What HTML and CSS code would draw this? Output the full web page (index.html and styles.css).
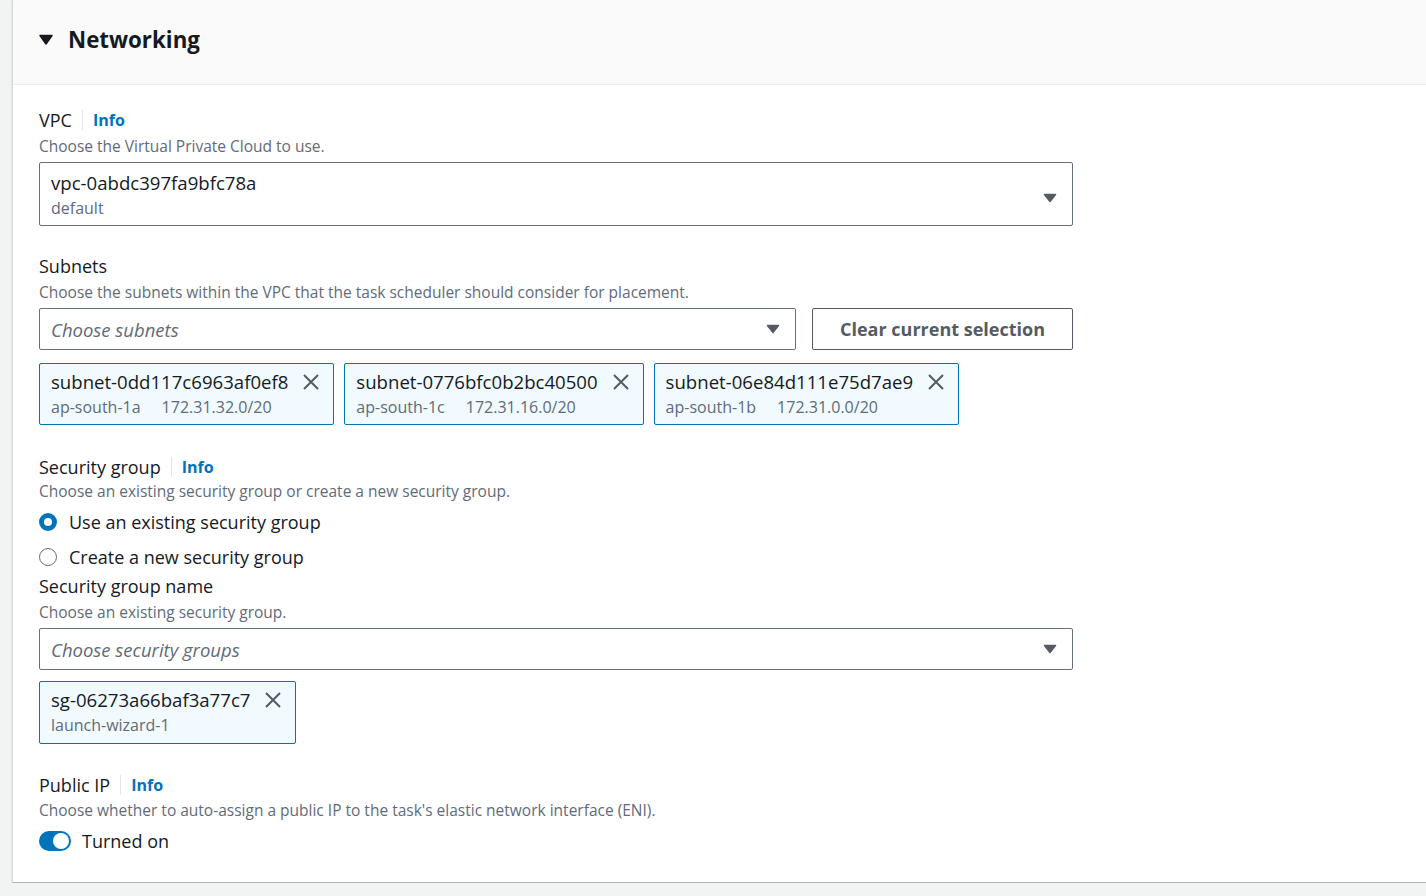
FILE: index.html
```html
<!DOCTYPE html>
<html lang="en">
<head>
  <meta charset="UTF-8">
  <title>Networking</title>
  <link rel="stylesheet" href="styles.css">
</head>
<body>
  <div class="panel">
    <div class="panel-header">
      <svg class="caret-down" width="14" height="11" viewBox="0 0 14 11"><path d="M1 1.5h12L7 10z" fill="#16191f" stroke="#16191f" stroke-width="1.5" stroke-linejoin="round"/></svg>
      <h2>Networking</h2>
    </div>

    <div class="panel-body">
      <div class="field field-vpc">
        <div class="label-row"><span class="label">VPC</span><span class="divider"></span><a class="info">Info</a></div>
        <div class="desc">Choose the Virtual Private Cloud to use.</div>
        <div class="select select-tall">
          <div class="select-text">
            <div class="value">vpc-0abdc397fa9bfc78a</div>
            <div class="subvalue">default</div>
          </div>
          <svg class="arrow" width="14" height="10" viewBox="0 0 14 10"><path d="M1.5 1.5h11L7 8.5z" fill="#545b64" stroke="#545b64" stroke-width="1.5" stroke-linejoin="round"/></svg>
        </div>
      </div>

      <div class="field field-subnets">
        <div class="label-row"><span class="label">Subnets</span></div>
        <div class="desc">Choose the subnets within the VPC that the task scheduler should consider for placement.</div>
        <div class="select-row">
          <div class="select select-narrow">
            <span class="placeholder">Choose subnets</span>
            <svg class="arrow" width="14" height="10" viewBox="0 0 14 10"><path d="M1.5 1.5h11L7 8.5z" fill="#545b64" stroke="#545b64" stroke-width="1.5" stroke-linejoin="round"/></svg>
          </div>
          <button class="btn">Clear current selection</button>
        </div>
        <div class="tokens tokens-subnets">
          <div class="token">
            <div class="token-text">
              <div class="value">subnet-0dd117c6963af0ef8</div>
              <div class="tags"><span>ap-south-1a</span><span>172.31.32.0/20</span></div>
            </div>
            <svg class="close" width="18" height="18" viewBox="0 0 18 18"><path d="M2 2l14 14M16 2L2 16" stroke="#545b64" stroke-width="2"/></svg>
          </div>
          <div class="token">
            <div class="token-text">
              <div class="value">subnet-0776bfc0b2bc40500</div>
              <div class="tags"><span>ap-south-1c</span><span>172.31.16.0/20</span></div>
            </div>
            <svg class="close" width="18" height="18" viewBox="0 0 18 18"><path d="M2 2l14 14M16 2L2 16" stroke="#545b64" stroke-width="2"/></svg>
          </div>
          <div class="token">
            <div class="token-text">
              <div class="value">subnet-06e84d111e75d7ae9</div>
              <div class="tags"><span>ap-south-1b</span><span>172.31.0.0/20</span></div>
            </div>
            <svg class="close" width="18" height="18" viewBox="0 0 18 18"><path d="M2 2l14 14M16 2L2 16" stroke="#545b64" stroke-width="2"/></svg>
          </div>
        </div>
      </div>

      <div class="field field-sg">
        <div class="label-row"><span class="label">Security group</span><span class="divider"></span><a class="info">Info</a></div>
        <div class="desc">Choose an existing security group or create a new security group.</div>
        <div class="radios">
          <label class="radio"><span class="dot checked"></span>Use an existing security group</label>
          <label class="radio"><span class="dot"></span>Create a new security group</label>
        </div>
      </div>

      <div class="field field-sgname">
        <div class="label-row"><span class="label">Security group name</span></div>
        <div class="desc">Choose an existing security group.</div>
        <div class="select">
          <span class="placeholder">Choose security groups</span>
          <svg class="arrow" width="14" height="10" viewBox="0 0 14 10"><path d="M1.5 1.5h11L7 8.5z" fill="#545b64" stroke="#545b64" stroke-width="1.5" stroke-linejoin="round"/></svg>
        </div>
        <div class="tokens tokens-sg">
          <div class="token">
            <div class="token-text">
              <div class="value">sg-06273a66baf3a77c7</div>
              <div class="tags"><span>launch-wizard-1</span></div>
            </div>
            <svg class="close" width="18" height="18" viewBox="0 0 18 18"><path d="M2 2l14 14M16 2L2 16" stroke="#545b64" stroke-width="2"/></svg>
          </div>
        </div>
      </div>

      <div class="field field-ip">
        <div class="label-row"><span class="label">Public IP</span><span class="divider"></span><a class="info">Info</a></div>
        <div class="desc">Choose whether to auto-assign a public IP to the task's elastic network interface (ENI).</div>
        <div class="toggle-row">
          <span class="toggle"><span class="knob"></span></span>
          <span>Turned on</span>
        </div>
      </div>
    </div>
  </div>
</body>
</html>
```

FILE: styles.css
```css
body {
  margin: 0;
  background: #f2f3f3;
  font-family: "Open Sans", "Noto Sans", Arial, sans-serif;
  color: #16191f;
  font-size: 18px;
}
.panel {
  margin-left: 12px;
  height: 882px;
  background: #ffffff;
  border-left: 1px solid #d5dbdb;
  border-bottom: 1px solid #aab7b8;
  box-shadow: 0 1px 2px rgba(0,0,0,0.15);
}
.panel-header {
  height: 85px;
  box-sizing: border-box;
  background: #fafafa;
  border-bottom: 1px solid #eaeded;
  display: flex;
  align-items: center;
  padding-left: 26px;
  padding-bottom: 6px;
}
.caret-down {
  margin-right: 15px;
}
.panel-header h2 {
  margin: 0;
  font-size: 22.3px;
  font-weight: 700;
}
.panel-body {
  padding: 24px 0 0 26px;
  width: 1034px;
}
.field-subnets { margin-top: 29px; }
.field-sg { margin-top: 31px; }
.field-sgname { margin-top: 7px; }
.field-ip { margin-top: 30px; }

.label-row {
  display: flex;
  align-items: center;
  height: 22px;
}
.label {
  font-size: 18px;
  line-height: 22px;
}
.divider {
  width: 1px;
  height: 20px;
  background: #e1e4e6;
  margin: 0 10px;
}
.info {
  color: #0073bb;
  font-weight: 700;
  font-size: 16px;
}
.desc {
  margin-top: 5px;
  font-size: 15.5px;
  line-height: 20px;
  color: #5f6b7a;
}
.field-sg .desc { margin-top: 3px; }
.field-ip .desc { margin-top: 4px; }
.select {
  margin-top: 6px;
  height: 42px;
  box-sizing: border-box;
  border: 1px solid #687078;
  border-radius: 2px;
  display: flex;
  align-items: center;
  justify-content: space-between;
  padding: 0 15px 0 11px;
}
.select-tall {
  height: 64px;
  align-items: flex-start;
  padding-top: 9px;
}
.select-tall .arrow {
  margin-top: 21px;
}
.value {
  font-size: 18.6px;
  line-height: 22px;
}
.subvalue, .tags {
  font-size: 16px;
  line-height: 20px;
  color: #5f6b7a;
  margin-top: 4px;
}
.placeholder {
  font-style: italic;
  color: #5f6b7a;
  font-size: 18.5px;
}
.select-row {
  display: flex;
  gap: 16px;
  margin-top: 6px;
}
.select-narrow {
  margin-top: 0;
  width: 757px;
}
.btn {
  flex: 1;
  height: 42px;
  background: #ffffff;
  border: 1px solid #545b64;
  border-radius: 2px;
  font-family: inherit;
  font-size: 18px;
  font-weight: 700;
  color: #545b64;
}
.tokens {
  display: flex;
  gap: 10px;
}
.tokens-subnets { margin-top: 13px; }
.tokens-sg { margin-top: 11px; }
.token {
  display: flex;
  align-items: flex-start;
  gap: 14px;
  height: 62px;
  box-sizing: border-box;
  padding: 7px 13px 0 11px;
  background: #f1faff;
  border: 1px solid #0073bb;
  border-radius: 2px;
}
.tokens-sg .token {
  height: 63px;
}
.token .close {
  margin-top: 2px;
}
.tags {
  display: flex;
  gap: 21px;
}
.radios {
  margin-top: 10px;
  display: flex;
  flex-direction: column;
  gap: 13px;
}
.radio {
  display: flex;
  align-items: center;
  gap: 12px;
  font-size: 18px;
  line-height: 22px;
}
.dot {
  width: 18px;
  height: 18px;
  box-sizing: border-box;
  border-radius: 50%;
  border: 1.5px solid #687078;
}
.dot.checked {
  border: 5px solid #0073bb;
}
.toggle-row {
  margin-top: 10px;
  height: 22px;
  display: flex;
  align-items: center;
  gap: 11px;
  font-size: 18px;
}
.toggle {
  width: 32px;
  height: 20px;
  border-radius: 10px;
  background: #0073bb;
  display: flex;
  align-items: center;
  justify-content: flex-end;
  padding-right: 2px;
  box-sizing: border-box;
}
.knob {
  width: 16px;
  height: 16px;
  border-radius: 50%;
  background: #ffffff;
}
```
